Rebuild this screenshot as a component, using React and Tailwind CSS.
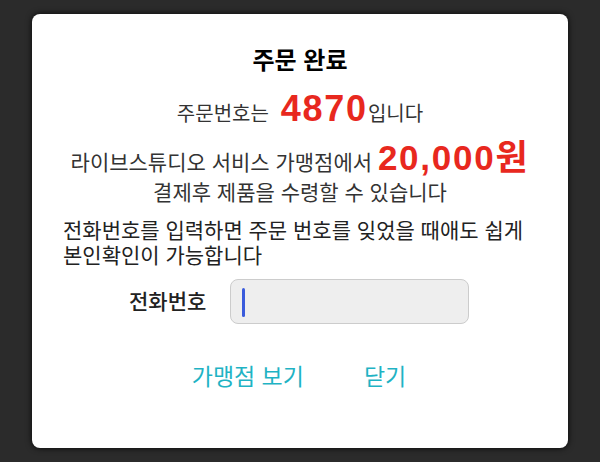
import React, { useState } from 'react';

const font = { fontFamily: '"Liberation Sans", "Noto Sans CJK KR", sans-serif' };

export default function App() {
  const [phone, setPhone] = useState('');

  return (
    <div className="min-h-[462px] bg-[#2b2b2b] pt-[14px] px-[32px]" style={font}>
      <div className="w-[536px] h-[434px] bg-white rounded-[8px] shadow-[0_0_6px_rgba(0,0,0,0.85)] flex flex-col pt-[31px]">
        <h1 className="text-center text-[24px] leading-[32px] font-bold text-black">주문 완료</h1>

        <p className="mt-[10px] text-center text-[20px] leading-[44px] text-[#333]">
          주문번호는<span className="text-[36px] font-bold text-[#e8281e] tracking-[0.05em]"> 4870</span>입니다
        </p>

        <p className="mt-0 text-center text-[21px] leading-[44px] text-[#333]">
          라이브스튜디오 서비스 가맹점에서 <span className="text-[35px] font-bold text-[#e8281e] tracking-[0.05em]">20,000원</span>
        </p>
        <p className="-mt-[6px] text-center text-[21px] leading-[28px] text-[#333]">결제후 제품을 수령할 수 있습니다</p>

        <div className="mt-[11px] pl-[31px] text-[21px] leading-[25px] text-[#222]">
          <div>전화번호를 입력하면 주문 번호를 잊었을 때애도 쉽게</div>
          <div>본인확인이 가능합니다</div>
        </div>

        <div className="mt-[11px] flex items-center pl-[97px] gap-[24px]">
          <label className="text-[21px] font-medium text-[#222]">전화번호</label>
          <div className="relative w-[239px] h-[45px] rounded-[8px] bg-[#eeeeee] border border-[#cccccc]">
            <input
              value={phone}
              onChange={(e) => setPhone(e.target.value)}
              className="w-full h-full bg-transparent outline-none px-[14px] text-[18px]"
            />
            {phone === '' && (
              <span className="absolute left-[11px] top-[8px] w-[3px] h-[29px] rounded-full bg-[#3a5bdc]" />
            )}
          </div>
        </div>

        <div className="mt-[38px] flex justify-center gap-[60px] pr-[2px]">
          <button className="text-[23px] leading-[30px] text-[#1fb3c4]">가맹점 보기</button>
          <button className="text-[23px] leading-[30px] text-[#1fb3c4]">닫기</button>
        </div>
      </div>
    </div>
  );
}
